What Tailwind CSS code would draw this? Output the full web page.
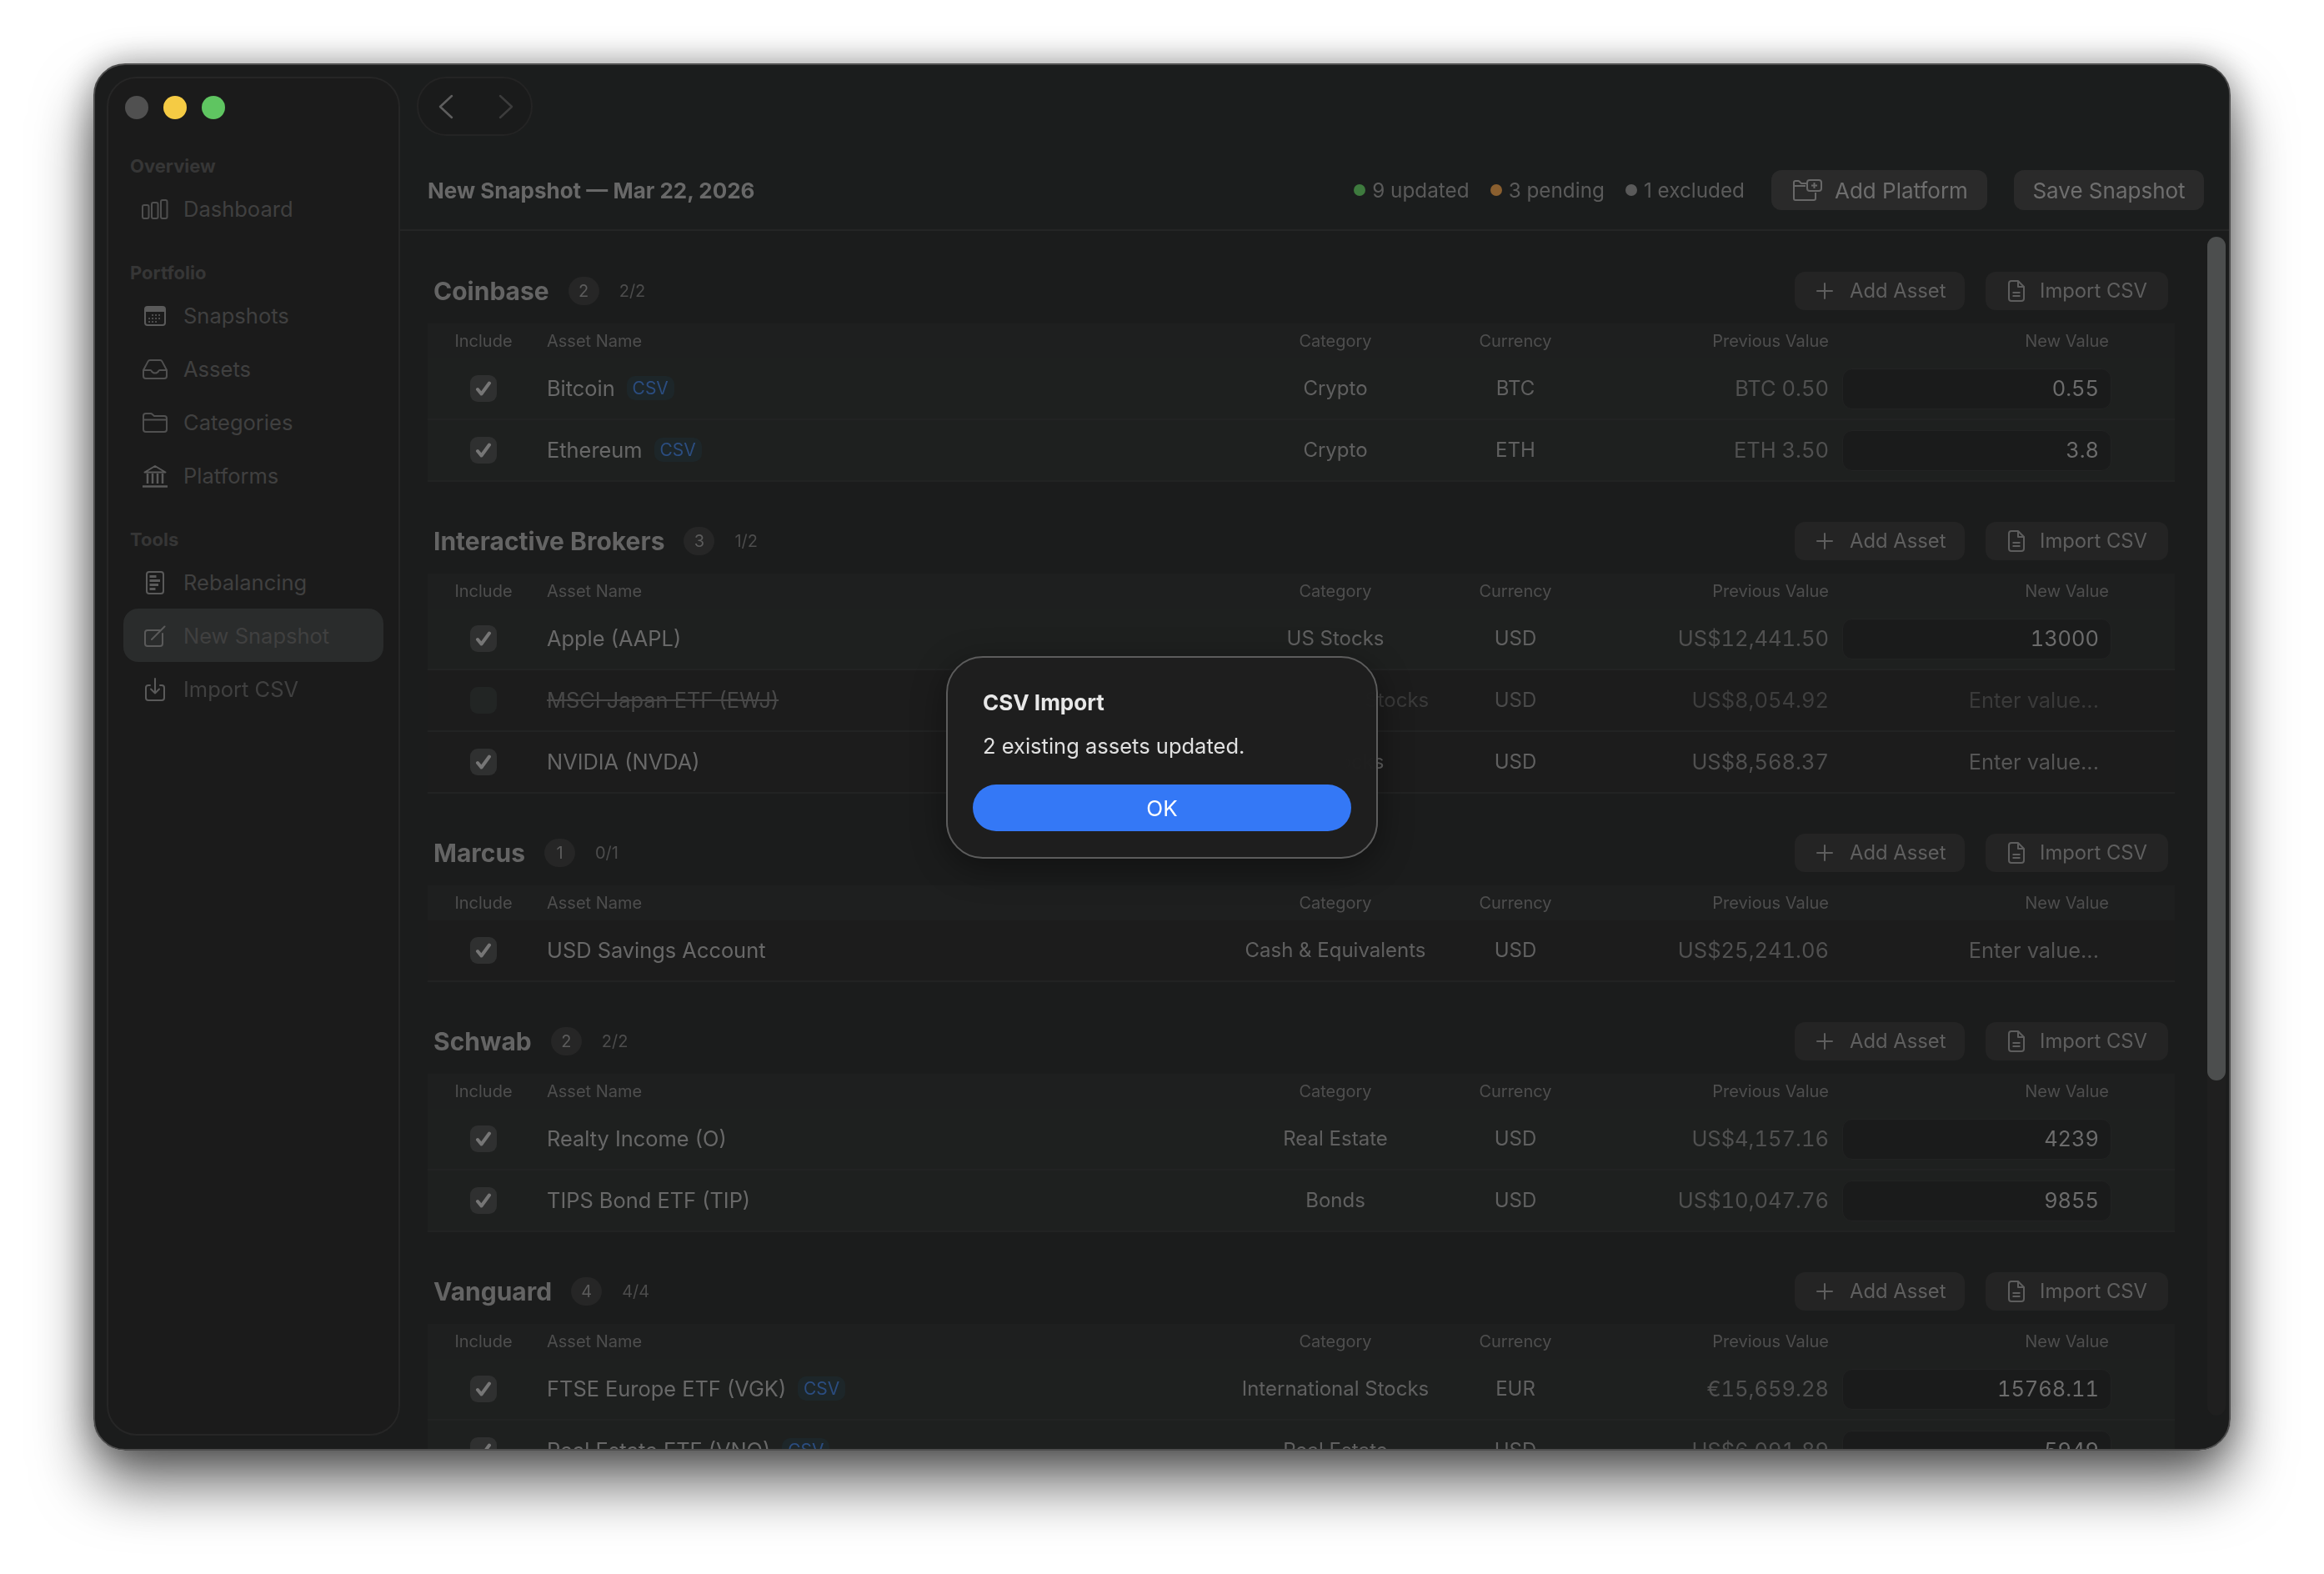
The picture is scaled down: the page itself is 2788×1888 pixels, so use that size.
<!DOCTYPE html>
<html lang="en">
<head>
    <meta charset="UTF-8">
    <title>New Snapshot</title>
    <script src="https://cdn.jsdelivr.net/npm/@tailwindcss/browser@4"></script>
</head>
<body class="bg-white overflow-hidden font-['Inter',sans-serif] antialiased">
    <div class="w-[2788px] h-[1888px] pt-[76px] pl-[112px]">
        <!-- Window -->
        <div class="relative flex w-[2564px] h-[1664px] rounded-[38px] bg-[#1b1c1c] border-2 border-[#4d4d4d] overflow-hidden">
            <!-- Sidebar -->
            <aside class="shrink-0 ml-[14px] mt-[14px] mb-[16px] w-[352px] rounded-[36px] border-2 border-[#262626] bg-[#1b1b1b] flex flex-col">
                <div class="flex gap-[18px] ml-[20px] mt-[21px] h-[28px]">
                    <span class="w-[28px] h-[28px] rounded-full bg-[#505050]"></span>
                    <span class="w-[28px] h-[28px] rounded-full bg-[#f5cb44]"></span>
                    <span class="w-[28px] h-[28px] rounded-full bg-[#5fc561]"></span>
                </div>
                <nav class="mt-[35px] px-[18px] text-[25.500px] text-[#404040]">
                    <div class="h-[40px] pt-[3px] pl-[8px] text-[22px] font-bold text-[#363636] flex items-center">Overview</div>
                    <a class="h-[64px] pt-[2px] flex items-center">
                        <span class="w-[72px] pl-[4px] flex justify-center"><svg width="32" height="24" viewBox="0 0 32 24" fill="none" stroke="#4e4e4e" stroke-width="2"><rect x="1" y="7" width="7.5" height="16" rx="2"/><rect x="12" y="4" width="7.5" height="19" rx="2"/><rect x="23" y="1" width="7.5" height="22" rx="2"/></svg></span>Dashboard
                    </a>
                    <div class="mt-[24px] h-[40px] pt-[3px] pl-[8px] text-[22px] font-bold text-[#363636] flex items-center">Portfolio</div>
                    <a class="h-[64px] pt-[2px] flex items-center">
                        <span class="w-[72px] pl-[4px] flex justify-center"><svg width="26" height="24" viewBox="0 0 26 24" fill="none"><rect x="1" y="1" width="24" height="22" rx="3" stroke="#5a5a5a" stroke-width="2"/><path d="M1 4a3 3 0 0 1 3-3h18a3 3 0 0 1 3 3v3H1z" fill="#5a5a5a"/><path d="M10 11h.1M14 11h.1M18 11h.1M6 15h.1M10 15h.1M14 15h.1M18 15h.1M6 19h.1M10 19h.1M14 19h.1" stroke="#5a5a5a" stroke-width="2" stroke-linecap="round"/></svg></span>Snapshots
                    </a>
                    <a class="h-[64px] pt-[2px] flex items-center">
                        <span class="w-[72px] pl-[4px] flex justify-center"><svg width="30" height="24" viewBox="0 0 30 24" fill="none" stroke="#505050" stroke-width="2" stroke-linejoin="round"><path d="M1 13 6.5 2.6A3 3 0 0 1 9 1h12a3 3 0 0 1 2.5 1.6L29 13v7a3 3 0 0 1-3 3H4a3 3 0 0 1-3-3z"/><path d="M1 13h8.5c.8 0 1 .5 1.4 1.2.8 1.500 2 2.300 4.100 2.300s3.300-.8 4.100-2.300c.4-.7.6-1.200 1.400-1.200H29"/></svg></span>Assets
                    </a>
                    <a class="h-[64px] pt-[2px] flex items-center">
                        <span class="w-[72px] pl-[4px] flex justify-center"><svg width="30" height="24" viewBox="0 0 30 24" fill="none" stroke="#505050" stroke-width="2" stroke-linejoin="round"><path d="M1 4a3 3 0 0 1 3-3h5.500c1 0 1.700.4 2.300 1l2.200 2H26a3 3 0 0 1 3 3v13a3 3 0 0 1-3 3H4a3 3 0 0 1-3-3z"/><path d="M1 8.500h28"/></svg></span>Categories
                    </a>
                    <a class="h-[64px] pt-[2px] flex items-center">
                        <span class="w-[72px] pl-[4px] flex justify-center"><svg width="30" height="28" viewBox="0 0 30 28" fill="none" stroke="#5a5a5a" stroke-width="2"><path d="M2.500 9.500 15 2l12.500 7.500z" stroke-linejoin="round"/><path d="M6 11v12M12 11v12M18 11v12M24 11v12" stroke-width="2.500"/><path d="M0 26.500h30" stroke-width="2.500"/></svg></span>Platforms
                    </a>
                    <div class="mt-[24px] h-[40px] pt-[3px] pl-[8px] text-[22px] font-bold text-[#363636] flex items-center">Tools</div>
                    <a class="h-[64px] pt-[2px] flex items-center">
                        <span class="w-[72px] pl-[4px] flex justify-center"><svg width="22" height="28" viewBox="0 0 22 28" fill="none"><rect x="1" y="1" width="20" height="26" rx="3" stroke="#5a5a5a" stroke-width="2"/><path d="M4.500 5h8v3h-8zM4.500 10h12.500v3H4.500zM4.500 15h10.500v3H4.500zM4.500 20h7v3h-7z" fill="#5a5a5a"/></svg></span>Rebalancing
                    </a>
                    <a class="h-[64px] pt-[2px] flex items-center rounded-[18px] bg-[#2a2c2c]">
                        <span class="w-[72px] pl-[4px] flex justify-center"><svg width="26" height="26" viewBox="0 0 26 26" fill="none" stroke="#5a5a5a" stroke-width="2" stroke-linecap="round"><path d="M19 6H4a3 3 0 0 0-3 3v13a3 3 0 0 0 3 3h15a3 3 0 0 0 3-3V10"/><path d="M9 17 24.500 1.500"/></svg></span>New Snapshot
                    </a>
                    <a class="h-[64px] pt-[2px] flex items-center">
                        <span class="w-[72px] pl-[4px] flex justify-center"><svg width="24" height="28" viewBox="0 0 24 28" fill="none" stroke="#5a5a5a" stroke-width="2" stroke-linecap="round" stroke-linejoin="round"><path d="M6 9H4a3 3 0 0 0-3 3v12a3 3 0 0 0 3 3h16a3 3 0 0 0 3-3V12a3 3 0 0 0-3-3h-2"/><path d="M12 1v17M7 13.500l5 5 5-5"/></svg></span>Import CSV
                    </a>
                </nav>
            </aside>

            <!-- Main -->
            <main class="flex-1 min-w-0 flex flex-col">
                <div class="h-[199px] shrink-0 border-b-2 border-[#242525] bg-[#1b1d1d] flex flex-col">
                    <div class="ml-[20px] mt-[14px] w-[139px] h-[71px] rounded-full border-2 border-[#242424] bg-[#1a1b1b] flex items-center justify-between pl-[24px] pr-[21px]">
                        <svg width="18" height="30" viewBox="0 0 18 30" fill="none" stroke="#5e5e5e" stroke-width="2.500" stroke-linecap="round" stroke-linejoin="round"><path d="M16 2 2 15l14 13"/></svg>
                        <svg width="18" height="30" viewBox="0 0 18 30" fill="none" stroke="#3c3c3c" stroke-width="2.500" stroke-linecap="round" stroke-linejoin="round"><path d="m2 2 14 13L2 28"/></svg>
                    </div>
                    <div class="mt-[41px] h-[48px] pl-[33px] pr-[30px] flex items-center">
                        <h1 class="text-[26px] font-bold text-[#686868]">New Snapshot — Mar 22, 2026</h1>
                        <div class="ml-auto flex items-center text-[24.300px] text-[#5a5a5a]">
                            <span class="w-[14px] h-[14px] rounded-full bg-[#3e7a3e] mr-[8px]"></span><span>9 updated</span>
                            <span class="ml-[25px] w-[14px] h-[14px] rounded-full bg-[#8a5f2f] mr-[8px]"></span><span>3 pending</span>
                            <span class="ml-[25px] w-[14px] h-[14px] rounded-full bg-[#5a5a5a] mr-[8px]"></span><span>1 excluded</span>
                        </div>
                        <button class="ml-[32px] h-[48px] w-[259px] pl-[26px] rounded-[12px] bg-[#2a2a2a] text-[26px] text-[#6e6e6e] flex items-center gap-[14px]">
                            <svg width="36" height="26" viewBox="0 0 36 26" fill="none" stroke="#686868" stroke-width="2" stroke-linejoin="round"><path d="M17 5H10L7.500 2.500A2 2 0 0 0 6 2H3a2 2 0 0 0-2 2v19a2 2 0 0 0 2 2h22a2 2 0 0 0 2-2v-7"/><path d="M1 8h14"/><rect x="17" y="1" width="17" height="13" rx="3"/><path d="M25.500 4v7M22 7.500h7"/></svg>
                            Add Platform
                        </button>
                        <button class="ml-[32px] h-[48px] w-[228px] rounded-[12px] bg-[#2a2a2a] text-[26px] text-[#6e6e6e]">Save Snapshot</button>
                    </div>
                </div>
                <div id="sections" class="flex-1 min-h-0 overflow-hidden pt-[49px] pl-[33px] pr-[65px] flex flex-col gap-[48px]"></div>
            </main>

            <!-- Scrollbar -->
            <div class="absolute right-[4px] top-[206px] bottom-[40px] w-[22px] rounded-full bg-[#1f1f1f]">
                <div class="h-[1012px] rounded-full bg-[#4c4e4e]"></div>
            </div>

            <!-- Alert -->
            <div class="absolute left-[1021px] top-[709px] w-[518px] h-[243px] rounded-[44px] border-2 border-[#5c5c5c] bg-[#1f1f1f]/95 backdrop-blur-xl shadow-[0_10px_40px_rgba(0,0,0,0.4)] px-[30px] pt-[38px]">
                <div class="pl-[12px] text-[26px] leading-[32px] font-bold text-[#e8e8e8]">CSV Import</div>
                <div class="pl-[12px] mt-[20px] text-[25.500px] leading-[32px] text-[#e0e0e0]">2 existing assets updated.</div>
                <button class="mt-[30px] w-full h-[56px] rounded-full bg-[#3478f6] text-[26px] text-white">OK</button>
            </div>
        </div>
    </div>

    <!-- Window shadow goes on its own layer behind the page content -->
    <div class="fixed left-[112px] top-[76px] w-[2564px] h-[1664px] rounded-[38px] -z-10 shadow-[0_40px_70px_rgba(0,0,0,0.6),0_0_40px_rgba(0,0,0,0.35)]"></div>

    <script>
        const data = [
            { name: 'Coinbase', count: 2, done: '2/2', rows: [
                { name: 'Bitcoin', csv: true, cat: 'Crypto', cur: 'BTC', prev: 'BTC 0.50', val: '0.55' },
                { name: 'Ethereum', csv: true, cat: 'Crypto', cur: 'ETH', prev: 'ETH 3.50', val: '3.8' },
            ]},
            { name: 'Interactive Brokers', count: 3, done: '1/2', rows: [
                { name: 'Apple (AAPL)', cat: 'US Stocks', cur: 'USD', prev: 'US$12,441.50', val: '13000' },
                { name: 'MSCI Japan ETF (EWJ)', off: true, cat: 'International Stocks', cur: 'USD', prev: 'US$8,054.92' },
                { name: 'NVIDIA (NVDA)', cat: 'US Stocks', cur: 'USD', prev: 'US$8,568.37' },
            ]},
            { name: 'Marcus', count: 1, done: '0/1', rows: [
                { name: 'USD Savings Account', cat: 'Cash &amp; Equivalents', cur: 'USD', prev: 'US$25,241.06' },
            ]},
            { name: 'Schwab', count: 2, done: '2/2', rows: [
                { name: 'Realty Income (O)', cat: 'Real Estate', cur: 'USD', prev: 'US$4,157.16', val: '4239' },
                { name: 'TIPS Bond ETF (TIP)', cat: 'Bonds', cur: 'USD', prev: 'US$10,047.76', val: '9855' },
            ]},
            { name: 'Vanguard', count: 4, done: '4/4', rows: [
                { name: 'FTSE Europe ETF (VGK)', csv: true, cat: 'International Stocks', cur: 'EUR', prev: '€15,659.28', val: '15768.11' },
                { name: 'Real Estate ETF (VNQ)', csv: true, cat: 'Real Estate', cur: 'USD', prev: 'US$6,091.89', val: '5949' },
            ]},
        ];

        const cols = 'grid grid-cols-[134px_835px_240px_192px_280px_339px_76px] items-center';

        const plusIcon = `<svg width="22" height="22" viewBox="0 0 22 22" fill="none" stroke="#5e5e5e" stroke-width="2" stroke-linecap="round"><path d="M11 2v18M2 11h18"/></svg>`;
        const docIcon = `<svg width="20" height="26" viewBox="0 0 20 26" fill="none" stroke="#5e5e5e" stroke-width="2" stroke-linejoin="round"><path d="M12 1H4a3 3 0 0 0-3 3v18a3 3 0 0 0 3 3h12a3 3 0 0 0 3-3V8z"/><path d="M12 1v7h7M5.500 15h9M5.500 19h9"/></svg>`;
        const checkIcon = `<svg width="20" height="18" viewBox="0 0 20 18" fill="none" stroke="#767676" stroke-width="4" stroke-linecap="round" stroke-linejoin="round"><path d="m3 10 4.500 5.500L17 2.500"/></svg>`;

        function createRow(row) {
            const rowBg = row.val ? 'bg-[#1e201f]' : 'bg-[#1c1c1c]';
            const box = row.off
                ? `<span class="w-[32px] h-[32px] rounded-[9px] bg-[#222524]"></span>`
                : `<span class="w-[32px] h-[32px] rounded-[9px] bg-[#2f3030] flex items-center justify-center">${checkIcon}</span>`;
            const badge = row.csv ? `<span class="ml-[14px] w-[57px] h-[29px] rounded-[10px] bg-[#1d2629] text-[21px] text-[#2b4d80] flex items-center justify-center">CSV</span>` : '';
            const nameText = row.off ? 'line-through text-[#484848]' : 'text-[#686868]';
            const field = row.val
                ? `<div class="h-[49px] rounded-[12px] bg-[#1a1b1b] border border-[#222323] pr-[14px] flex items-center justify-end text-[#6c6c6c] tabular-nums">${row.val}</div>`
                : `<div class="h-[49px] pr-[15px] flex items-center justify-end ${row.off ? 'text-[#3a3a3a]' : 'text-[#555555]'}">Enter value...</div>`;
            return `
                <div class="${cols} h-[74px] border-b-2 border-[#222323] ${rowBg} text-[25.400px]">
                    <div class="flex justify-center">${box}</div>
                    <div class="pl-[9px] flex items-center ${nameText}">${row.name}${badge}</div>
                    <div class="text-center text-[24px] whitespace-nowrap ${row.off ? 'text-[#3a3a3a]' : 'text-[#606060]'}">${row.cat}</div>
                    <div class="text-center text-[24px] ${row.off ? 'text-[#4a4a4a]' : 'text-[#606060]'}">${row.cur}</div>
                    <div class="text-right text-[25.500px] tabular-nums whitespace-nowrap ${row.off ? 'text-[#3e3e3e]' : 'text-[#505050]'}">${row.prev}</div>
                    <div class="pl-[16px]">${field}</div>
                </div>`;
        }

        function createSection(section) {
            return `
                <section class="shrink-0">
                    <div class="h-[46px] pl-[7px] pr-[8px] flex items-center">
                        <h2 class="text-[30px] font-bold text-[#646464]">${section.name}</h2>
                        <span class="ml-[23px] w-[37px] h-[34px] rounded-full bg-[#262626] text-[20px] text-[#5c5c5c] flex items-center justify-center">${section.count}</span>
                        <span class="ml-[24px] text-[20px] text-[#4c4c4c]">${section.done}</span>
                        <button class="ml-auto w-[204px] h-[46px] pl-[25px] rounded-[12px] bg-[#242424] text-[23.800px] text-[#5f5f5f] flex items-center gap-[19px]">${plusIcon}Add Asset</button>
                        <button class="ml-[25px] w-[219px] h-[46px] pl-[27px] rounded-[12px] bg-[#242424] text-[23.800px] text-[#5f5f5f] flex items-center gap-[18px]">${docIcon}Import CSV</button>
                    </div>
                    <div class="mt-[16px]">
                        <div class="${cols} h-[42px] bg-[#1e1f1f] text-[20px] text-[#4e4e4e]">
                            <div class="text-center">Include</div>
                            <div class="pl-[9px]">Asset Name</div>
                            <div class="text-center">Category</div>
                            <div class="text-center">Currency</div>
                            <div class="text-right">Previous Value</div>
                            <div class="text-right pr-[3px]">New Value</div>
                        </div>
                        ${section.rows.map(createRow).join('')}
                    </div>
                </section>`;
        }

        document.getElementById('sections').innerHTML = data.map(createSection).join('');
    </script>
</body>
</html>
